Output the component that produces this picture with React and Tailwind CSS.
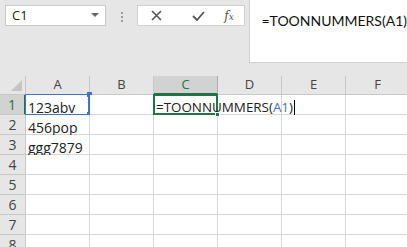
import React from 'react';

const cols = ['A', 'B', 'C', 'D', 'E', 'F'];
const rows = [1, 2, 3, 4, 5, 6, 7, 8];
const values = { A1: '123abv', A2: '456pop', A3: 'ggg7879' };

function Formula({ className = '' }) {
  return (
    <span className={`whitespace-nowrap text-[#222] ${className}`}>
      =TOONNUMMERS(<span className="text-[#4472c4]">A1</span>)
    </span>
  );
}

function Cell({ col, row }) {
  const key = col + row;
  const base = 'relative border-r border-b border-[#d6d6d6] bg-white';

  if (key === 'A1') {
    return (
      <div className={`${base} bg-[#e3ecf7]`}>
        <div className="absolute -left-px -top-px right-[-1px] bottom-[-1px] border border-[#4472c4] border-r-2" />
        <span className="absolute -top-[3px] right-[-3px] w-[5px] h-[5px] bg-[#4472c4]" />
        <span className="absolute -bottom-[3px] right-[-3px] w-[5px] h-[5px] bg-[#4472c4]" />
        <span className="absolute left-[2px] top-[2px] text-[14px] text-[#222]">{values[key]}</span>
      </div>
    );
  }

  if (key === 'C1') {
    return (
      <div className={`${base} z-10`}>
        <div className="absolute -left-px -top-px right-[-1px] bottom-[-1px] border-2 border-[#217346]" />
        <span className="absolute -bottom-[3px] right-[-3px] w-[5px] h-[5px] bg-[#217346] border border-white" />
        <span className="absolute left-[2px] top-[2px] text-[13.4px] flex items-center">
          <Formula />
          <span className="w-px h-[15px] bg-black ml-[1px]" />
        </span>
      </div>
    );
  }

  return (
    <div className={base}>
      {values[key] && (
        <span className="absolute left-[2px] top-[2px] text-[14px] text-[#222]">{values[key]}</span>
      )}
    </div>
  );
}

export default function App() {
  return (
    <div className="w-[407px] h-[247px] overflow-hidden bg-[#e6e6e6] font-['Lato',sans-serif] flex flex-col">
      <div className="flex items-start h-[64px] shrink-0">
        <div className="ml-[5px] mt-[5px] w-[102px] h-[21px] bg-white border border-[#c8c8c8] flex items-center justify-between px-[6px] font-['Open_Sans',sans-serif] text-[13px] text-[#222]">
          <span>C1</span>
          <svg width="8" height="5" viewBox="0 0 8 5">
            <path d="M0 0h8L4 4z" fill="#666" />
          </svg>
        </div>
        <div className="w-[31px] h-[31px] flex flex-col items-center justify-center gap-[2px] mt-[1px]">
          <span className="w-[2px] h-[2px] bg-[#9a9a9a]" />
          <span className="w-[2px] h-[2px] bg-[#9a9a9a]" />
          <span className="w-[2px] h-[2px] bg-[#9a9a9a]" />
        </div>
        <div className="mt-[5px] w-[109px] h-[21px] bg-white border border-[#d0d0d0] flex items-center">
          <svg className="ml-[13px]" width="11" height="11" viewBox="0 0 11 11">
            <path d="M1 1l9 9M10 1l-9 9" stroke="#555" strokeWidth="1.6" />
          </svg>
          <svg className="ml-[30px]" width="13" height="10" viewBox="0 0 13 10">
            <path d="M1 5l4 4 7-8" stroke="#555" strokeWidth="1.8" fill="none" />
          </svg>
          <span className="ml-[19px] font-['DejaVu_Serif',serif] italic text-[12px] text-[#555]">
            f<span className="text-[9px]">x</span>
          </span>
        </div>
        <div className="ml-[4px] flex-1 h-[63px] bg-white border-l border-b border-[#d0d0d0] pl-[11px] pt-[10px] text-[14px]">
          <span className="whitespace-nowrap text-[#111]">=TOONNUMMERS(A1)</span>
        </div>
      </div>

      <div className="mt-[12px] grid grid-cols-[26px_repeat(6,64px)] grid-rows-[19px_repeat(8,20px)] font-['Open_Sans',sans-serif]">
        <div className="relative border-r border-b border-[#c8c8c8] bg-[#e6e6e6]">
          <svg className="absolute right-[3px] bottom-[3px]" width="11" height="11" viewBox="0 0 11 11">
            <path d="M11 0v11H0z" fill="#c4c4c4" />
          </svg>
        </div>
        {cols.map((c) =>
          c === 'C' ? (
            <div
              key={c}
              className="flex items-center justify-center bg-[#d2d2d2] border-r border-[#ababab] border-b-2 border-b-[#217346] text-[13px] text-[#217346]"
            >
              {c}
            </div>
          ) : (
            <div
              key={c}
              className="flex items-center justify-center bg-[#e6e6e6] border-r border-b border-[#c8c8c8] text-[13px] text-[#444]"
            >
              {c}
            </div>
          )
        )}
        {rows.map((r) => (
          <React.Fragment key={r}>
            {r === 1 ? (
              <div className="flex items-center justify-center bg-[#d2d2d2] border-b border-[#c8c8c8] border-r-2 border-r-[#217346] text-[14px] text-[#217346]">
                {r}
              </div>
            ) : (
              <div className="flex items-center justify-center bg-[#e6e6e6] border-r border-b border-[#c8c8c8] text-[14px] text-[#444]">
                {r}
              </div>
            )}
            {cols.map((c) => (
              <Cell key={c + r} col={c} row={r} />
            ))}
          </React.Fragment>
        ))}
      </div>
    </div>
  );
}
